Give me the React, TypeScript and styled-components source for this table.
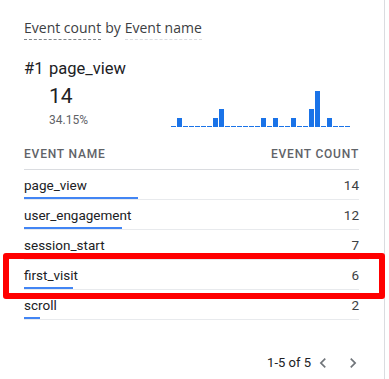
import styled, { createGlobalStyle } from "styled-components";
import { MdChevronLeft, MdChevronRight } from "react-icons/md";

const GlobalStyle = createGlobalStyle`
  html, body {
    margin: 0;
    padding: 0;
    background: #ffffff;
  }
  body {
    font-family: Roboto, "Liberation Sans", Arial, sans-serif;
    color: #202124;
  }
`;

const Card = styled.div`
  position: relative;
  box-sizing: border-box;
  width: 385px;
  height: 379px;
  padding: 18px 25px 0 24px;
  border-right: 1px solid #dadce0;
  background: #ffffff;
  display: flex;
  flex-direction: column;
`;

const Title = styled.div`
  font-family: "Open Sans", Roboto, sans-serif;
  font-size: 14px;
  line-height: 20px;
  color: #3c4043;
  display: flex;
  gap: 4px;
`;

const DashedLabel = styled.span<{ $muted?: boolean }>`
  display: inline-block;
  padding-bottom: 1px;
  border-bottom: 1px dashed ${({ $muted }) => ($muted ? "#dadce0" : "#80868b")};
`;

const Summary = styled.div`
  margin-top: 17px;
  display: flex;
  justify-content: space-between;
  align-items: flex-end;
`;

const SummaryText = styled.div`
  display: grid;
  grid-template-columns: 25px auto;
`;

const Rank = styled.div`
  font-size: 16.5px;
  line-height: 24px;
  color: #202124;
`;

const TopName = styled.div`
  font-size: 16.5px;
  line-height: 24px;
  color: #202124;
`;

const BigValue = styled.div`
  grid-column: 2;
  margin-top: 1px;
  font-size: 21px;
  line-height: 28px;
  color: #202124;
`;

const Percent = styled.div`
  grid-column: 2;
  margin-top: 2px;
  font-size: 12px;
  line-height: 16px;
  color: #5f6368;
`;

const Sparkline = styled.div`
  display: flex;
  align-items: flex-end;
  gap: 1px;
  margin-right: 9px;
  margin-bottom: 1px;
  height: 40px;
`;

const SparkBar = styled.div`
  width: 5px;
  background: #1a73e8;
`;

const HeaderRow = styled.div`
  margin-top: 18px;
  display: flex;
  justify-content: space-between;
  padding-bottom: 7px;
  border-bottom: 1px solid #dadce0;
  font-size: 12px;
  line-height: 16px;
  font-weight: 500;
  letter-spacing: 0.8px;
  color: #5f6368;
  text-transform: uppercase;
`;

const Row = styled.div`
  box-sizing: border-box;
  height: 30px;
  padding-top: 5px;
  border-bottom: 1px solid #e8eaed;
  display: grid;
  grid-template-columns: 1fr auto;
  grid-template-rows: 20px 2px;
  row-gap: 2px;
  font-size: 13.5px;
  line-height: 20px;
`;

const RowName = styled.div`
  color: #202124;
`;

const RowValue = styled.div`
  color: #3c4043;
  text-align: right;
`;

const ShareBar = styled.div`
  grid-column: 1;
  height: 2px;
  background: #4285f4;
`;

const Pager = styled.div`
  margin-top: 33px;
  margin-right: -6px;
  display: flex;
  align-items: center;
  justify-content: flex-end;
  gap: 6px;
  font-size: 13px;
  line-height: 20px;
  color: #202124;
`;

const PagerLabel = styled.span`
  margin-right: -6px;
`;

const PagerButton = styled.span`
  display: flex;
  width: 24px;
  justify-content: center;
  color: #70757a;
`;

const Highlight = styled.div`
  position: absolute;
  left: 3px;
  top: 253px;
  width: 382px;
  height: 46px;
  box-sizing: border-box;
  border: 6px solid #ff0000;
  border-radius: 3px;
  pointer-events: none;
`;

const daily = [0, 1, 0, 0, 0, 0, 0, 1, 2, 0, 0, 0, 0, 0, 0, 1, 0, 1, 0, 0, 1, 0, 0, 2, 4, 0, 1, 0, 0, 0];

const events = [
  { name: "page_view", count: 14 },
  { name: "user_engagement", count: 12 },
  { name: "session_start", count: 7 },
  { name: "first_visit", count: 6 },
  { name: "scroll", count: 2 },
];

const maxCount = Math.max(...events.map((e) => e.count));

export default function App() {
  return (
    <>
      <GlobalStyle />
      <Card>
        <Title>
          <DashedLabel>Event count</DashedLabel>
          <span>by</span>
          <DashedLabel $muted>Event name</DashedLabel>
        </Title>

        <Summary>
          <SummaryText>
            <Rank>#1</Rank>
            <TopName>page_view</TopName>
            <BigValue>14</BigValue>
            <Percent>34.15%</Percent>
          </SummaryText>
          <Sparkline>
            {daily.map((v, i) => (
              <SparkBar key={i} style={{ height: v === 0 ? 1 : v * 9 }} />
            ))}
          </Sparkline>
        </Summary>

        <HeaderRow>
          <span>Event name</span>
          <span>Event count</span>
        </HeaderRow>

        {events.map((e) => (
          <Row key={e.name}>
            <RowName>{e.name}</RowName>
            <RowValue>{e.count}</RowValue>
            <ShareBar style={{ width: Math.round((e.count / maxCount) * 114) }} />
          </Row>
        ))}

        <Pager>
          <PagerLabel>1-5 of 5</PagerLabel>
          <PagerButton>
            <MdChevronLeft size={20} />
          </PagerButton>
          <PagerButton>
            <MdChevronRight size={20} />
          </PagerButton>
        </Pager>

        <Highlight />
      </Card>
    </>
  );
}
